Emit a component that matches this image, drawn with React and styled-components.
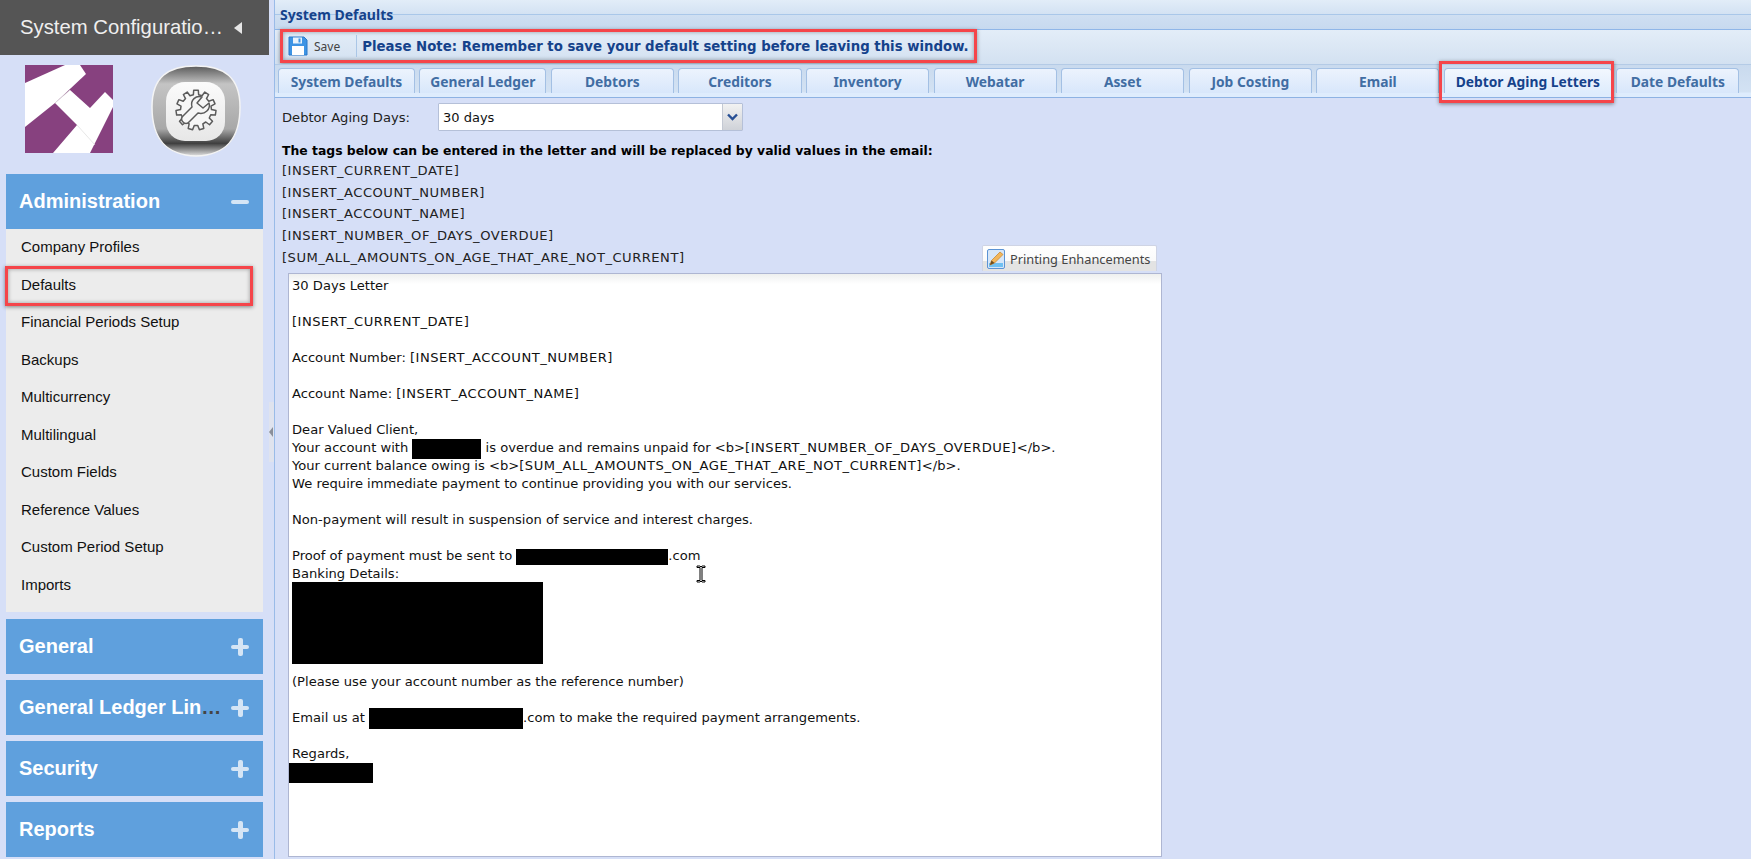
import React from "react";
import styled, { createGlobalStyle } from "styled-components";

const Global = createGlobalStyle`
  html, body { margin: 0; padding: 0; height: 859px; overflow: hidden; background: #d6dff7; }
  #root { height: 859px; }
  * { box-sizing: border-box; }
`;

const Page = styled.div`
  display: flex;
  height: 859px;
  width: 1751px;
  overflow: hidden;
  background: #d6dff7;
`;

const Sidebar = styled.aside`
  width: 269px;
  flex: none;
  display: flex;
  flex-direction: column;
  font-family: "Liberation Sans", Arial, sans-serif;
`;

const AppHeader = styled.header`
  height: 55px;
  background: #555555;
  color: #efefef;
  display: flex;
  align-items: center;
  padding: 0 27px 0 20px;
  justify-content: space-between;
`;

const AppTitle = styled.div`
  width: 204px;
  font-size: 20.3px;
  white-space: nowrap;
  overflow: hidden;
  text-overflow: ellipsis;
`;

const CollapseArrow = styled.span`
  width: 0;
  height: 0;
  border-style: solid;
  border-width: 6.5px 8px 6.5px 0;
  border-color: transparent #e6e6e6 transparent transparent;
`;

const LogoRow = styled.div`
  height: 119px;
  display: flex;
  align-items: flex-start;
  padding: 10px 0 0 25px;
  gap: 37px;
`;

const SectionStack = styled.div`
  display: flex;
  flex-direction: column;
  padding: 0 6px;
  gap: 6px;
`;

const SectionHeader = styled.div`
  height: 55px;
  background: #5fa0dd;
  display: flex;
  align-items: center;
  padding: 0 14px 0 13px;
  justify-content: space-between;
`;

const SectionTitle = styled.div`
  width: 203px;
  color: #444;
  font-size: 20px;
  font-weight: 700;
  white-space: nowrap;
  overflow: hidden;
  text-overflow: ellipsis;
  span { color: #fff; }
`;

const SectionIcon = styled.span`
  position: relative;
  width: 18px;
  height: 18px;
  flex: none;
  &::before {
    content: "";
    position: absolute;
    left: 0;
    right: 0;
    top: 7px;
    height: 4.5px;
    border-radius: 2px;
    background: #d5e5f5;
  }
  &::after {
    content: "";
    display: ${(p) => (p.$open ? "none" : "block")};
    position: absolute;
    top: 0;
    bottom: 0;
    left: 7px;
    width: 4.5px;
    border-radius: 2px;
    background: #d5e5f5;
  }
`;

const MenuBody = styled.div`
  background: #ececec;
  padding-bottom: 8px;
  margin-bottom: 1px;
`;

const MenuItem = styled.div`
  position: relative;
  height: 37.5px;
  padding: 9px 0 0 15px;
  font-size: 15px;
  line-height: 18px;
  color: #111;
  ${(p) =>
    p.$marked &&
    `&::after {
      content: "";
      position: absolute;
      left: -1px;
      right: 10px;
      top: -1px;
      bottom: -2px;
      border: 3px solid #f5454a;
      box-shadow: 0 1px 4px rgba(0,0,0,.45), inset 0 0 4px rgba(0,0,0,.35);
    }`}
`;

const Splitter = styled.div`
  width: 5px;
  flex: none;
  display: flex;
  flex-direction: column;
  padding-top: 402px;
`;

const SplitterGrip = styled.div`
  height: 60px;
  background: #dfe3ee;
  display: flex;
  align-items: center;
  &::before {
    content: "";
    border-style: solid;
    border-width: 5px 4px 5px 0;
    border-color: transparent #8a8f99 transparent transparent;
    margin-left: 0;
  }
`;

const Main = styled.main`
  flex: 1;
  min-width: 0;
  display: flex;
  flex-direction: column;
  border-left: 1px solid #99bbe8;
  font-family: "Noto Sans", Tahoma, sans-serif;
`;

const PanelTitle = styled.div`
  height: 30px;
  padding: 7px 0 0 5px;
  font-size: 14px;
  line-height: 16px;
  font-weight: 700;
  color: #15428b;
  border-bottom: 1px solid #8fb6e8;
  background: linear-gradient(#e2edf8 0, #d3e2f3 14px, #a9c7e9 14px, #a9c7e9 15px, #cfdff2 15px, #c6d9ef 30px);
`;

const Toolbar = styled.div`
  height: 34px;
  padding-left: 5px;
  display: flex;
  align-items: flex-start;
  background: linear-gradient(#e3edf8, #d3e1f1);
`;

const MarkedGroup = styled.div`
  margin-top: -1px;
  height: 34px;
  width: 697px;
  padding-left: 5px;
  display: flex;
  align-items: center;
  border: 3px solid #f5454a;
  box-shadow: 0 1px 4px rgba(0,0,0,.4), inset 0 0 4px rgba(0,0,0,.35);
`;

const SaveButton = styled.div`
  display: flex;
  align-items: center;
  gap: 6px;
  padding-right: 16px;
  font-size: 12px;
  color: #444;
  border-right: 1px solid #aac6e6;
  height: 22px;
`;

const Note = styled.div`
  margin-left: 5px;
  font-family: "DejaVu Sans", Verdana, sans-serif;
  font-size: 13.3px;
  font-weight: 700;
  color: #15428b;
  white-space: nowrap;
`;

const TabStrip = styled.div`
  height: 34px;
  padding: 3px 0 0 3px;
  display: flex;
  gap: 4.4px;
  align-items: flex-start;
  border-top: 1px solid #b4cbe6;
  border-bottom: 1px solid #8db2e3;
  background: linear-gradient(#c9daee 0, #d3e2f3 27px, #deecfd 28px);
`;

const Tab = styled.div`
  position: relative;
  flex: none;
  width: ${(p) => p.$w || 123.2}px;
  height: 25px;
  display: flex;
  align-items: center;
  justify-content: center;
  font-size: 13.8px;
  font-weight: 700;
  white-space: nowrap;
  color: ${(p) => (p.$active ? "#15428b" : "#416da3")};
  border: 1px solid #a3c0e4;
  border-bottom: none;
  border-radius: 4px 4px 0 0;
  background: ${(p) => (p.$active ? "linear-gradient(#f2f7fe, #deecfd)" : "linear-gradient(#ecf3fd, #d8e7fb)")};
  ${(p) =>
    p.$active &&
    `&::after {
      content: "";
      position: absolute;
      left: -6px;
      right: -3px;
      top: -8px;
      bottom: -10px;
      border: 3px solid #f5454a;
      box-shadow: 0 1px 4px rgba(0,0,0,.45);
    }`}
`;

const Content = styled.div`
  flex: 1;
  min-height: 0;
  padding: 5px 0 0 7px;
  display: flex;
  flex-direction: column;
  color: #111;
  font-family: "DejaVu Sans", Verdana, sans-serif;
`;

const FieldRow = styled.div`
  display: flex;
  align-items: center;
  height: 28px;
`;

const FieldLabel = styled.label`
  width: 156px;
  font-size: 13.1px;
  color: #222;
`;

const Select = styled.div`
  width: 305px;
  height: 28px;
  display: flex;
  border: 1px solid #b5c0d8;
  background: #fff;
  border-radius: 1px;
`;

const SelectValue = styled.div`
  flex: 1;
  padding-left: 4px;
  line-height: 27px;
  font-size: 13px;
`;

const SelectArrow = styled.div`
  width: 20px;
  display: flex;
  align-items: center;
  justify-content: center;
  border-left: 1px solid #c4c9d3;
  background: linear-gradient(#f2f2f2, #cfd2d8);
`;

const TagsHeading = styled.div`
  margin-top: 11px;
  font-size: 12.4px;
  font-weight: 700;
  line-height: 18px;
  color: #000;
`;

const TagLine = styled.div`
  height: 21.7px;
  line-height: 21.7px;
  font-size: 13.1px;
  letter-spacing: 0.5px;
  color: #222;
`;

const EditorHead = styled.div`
  position: relative;
  height: 5px;
`;

const PrintButton = styled.div`
  position: absolute;
  left: 700px;
  top: -23px;
  width: 175px;
  height: 26px;
  display: flex;
  align-items: center;
  gap: 5px;
  padding-left: 4px;
  font-family: "Noto Sans", Tahoma, sans-serif;
  font-size: 12.8px;
  color: #444;
  border: 1px solid #cfd4e4;
  border-bottom: none;
  border-radius: 2px 2px 0 0;
  background: linear-gradient(#ffffff 0, #fafafa 60%, #e3e3e3 62%, #e3e3e3);
`;

const Editor = styled.div`
  position: relative;
  margin-left: 6px;
  width: 874px;
  height: 584px;
  padding: 3px 0 0 3px;
  border: 1px solid #aeb6d2;
  background: linear-gradient(#eef0ef 0, #ffffff 10px);
  font-size: 13.1px;
  line-height: 18px;
  color: #111;
  white-space: nowrap;
`;

const Line = styled.div`
  height: 18px;
`;

const Caps = styled.span`
  letter-spacing: 0.5px;
`;

const Redact = styled.span`
  display: inline-block;
  vertical-align: middle;
  background: #000;
  width: ${(p) => p.$w}px;
  height: ${(p) => p.$h}px;
  margin: ${(p) => (18 - p.$h) / 2}px 0;
`;

const RedactBlock = styled.div`
  background: #000;
  width: ${(p) => p.$w}px;
  height: ${(p) => p.$h}px;
  margin-top: ${(p) => p.$mt || 0}px;
  margin-bottom: ${(p) => p.$mb || 0}px;
  margin-left: ${(p) => p.$ml || 0}px;
`;

const TextCursor = styled.svg`
  position: absolute;
  left: 407px;
  top: 291px;
`;

function gearPath(cx, cy, R, r, n) {
  const pts = [];
  const step = (Math.PI * 2) / n;
  for (let i = 0; i < n; i++) {
    const a = i * step - Math.PI / 2;
    const w = step * 0.2;
    const add = (rad, ang) => pts.push(`${(cx + rad * Math.cos(ang)).toFixed(2)} ${(cy + rad * Math.sin(ang)).toFixed(2)}`);
    add(r, a - w * 1.5);
    add(R, a - w);
    add(R, a + w);
    add(r, a + w * 1.5);
  }
  return "M" + pts.join("L") + "Z";
}

const HLogo = () => (
  <svg width="88" height="88" viewBox="0 0 88 88">
    <rect width="88" height="88" fill="#87417f" />
    <path d="M0 18L40 0H55L61 9L30 38L0 62Z" fill="#fff" />
    <path d="M30 38L45 25L65 43L80 27L88 35V42L65 88H28L52 60Z" fill="#fff" />
    <path d="M30 38L45 25M52 60L70 80" stroke="#ddd" strokeWidth="0.7" fill="none" />
  </svg>
);

const GearLogo = () => (
  <svg width="92" height="92" viewBox="0 0 92 92">
    <defs>
      <linearGradient id="bevel" x1="0" y1="0" x2="0" y2="1">
        <stop offset="0" stopColor="#5a5a5a" />
        <stop offset="0.2" stopColor="#c4c4c4" />
        <stop offset="0.7" stopColor="#a8a8a8" />
        <stop offset="0.86" stopColor="#3f3f3f" />
        <stop offset="1" stopColor="#e2e2e2" />
      </linearGradient>
      <linearGradient id="face" x1="0" y1="0" x2="0" y2="1">
        <stop offset="0" stopColor="#fbfbfb" />
        <stop offset="1" stopColor="#e7e7e7" />
      </linearGradient>
    </defs>
    <path d="M46 1C74 1 90 12 90 42C90 74 76 90 46 91C16 90 2 74 2 42C2 12 18 1 46 1Z" fill="url(#bevel)" stroke="#f4f4f4" strokeWidth="1.5" />
    <rect x="16" y="17" width="59" height="59" rx="19" fill="url(#face)" />
    <path d={gearPath(46, 45, 20, 15.5, 11)} fill="#f6f6f6" stroke="#5b5b5b" strokeWidth="1.5" strokeLinejoin="round" />
    <circle cx="46" cy="45" r="11" fill="#f6f6f6" stroke="none" />
    <path d="M52 32C46 30 40 35 42 42L33 51C29 55 35 61 39 57L48 48C55 50 61 44 59 38L53 43L47 38Z" fill="#f6f6f6" stroke="#5b5b5b" strokeWidth="1.5" strokeLinejoin="round" />
  </svg>
);

const FloppyIcon = () => (
  <svg width="20" height="20" viewBox="0 0 20 20">
    <path d="M1 1H16L19 4V19H1Z" fill="#3d94e4" stroke="#2b79c8" strokeWidth="1" />
    <rect x="5" y="1.5" width="9" height="6" fill="#e8f2fb" />
    <rect x="10.5" y="2.5" width="2" height="4" fill="#3d94e4" />
    <rect x="4" y="10" width="12" height="9" fill="#ffffff" />
  </svg>
);

const PencilIcon = () => (
  <svg width="18" height="20" viewBox="0 0 18 20">
    <rect x="0.5" y="0.5" width="17" height="19" rx="1.5" fill="#d6e6f8" stroke="#5b93d4" />
    <rect x="2" y="14" width="14" height="4" fill="#6fc0f2" />
    <path d="M3 16L4.5 11.5L13 3L16 5.5L7.5 14Z" fill="#f2b65a" stroke="#c98a32" strokeWidth="0.8" />
    <path d="M3 16L4.5 11.5L7.5 14Z" fill="#6b4b20" />
  </svg>
);

const ChevronIcon = () => (
  <svg width="11" height="8" viewBox="0 0 11 8">
    <path d="M1 1.5L5.5 6L10 1.5" fill="none" stroke="#274f94" strokeWidth="2.4" />
  </svg>
);

const menuItems = ["Company Profiles", "Defaults", "Financial Periods Setup", "Backups", "Multicurrency", "Multilingual", "Custom Fields", "Reference Values", "Custom Period Setup", "Imports"];
const closedSections = ["General", "General Ledger Linking", "Security", "Reports"];
const tabs = [
  { label: "System Defaults", width: 137 },
  { label: "General Ledger", width: 127 },
  { label: "Debtors" },
  { label: "Creditors" },
  { label: "Inventory" },
  { label: "Webatar" },
  { label: "Asset" },
  { label: "Job Costing" },
  { label: "Email" },
  { label: "Debtor Aging Letters", width: 168, active: true },
  { label: "Date Defaults" },
];
const tags = ["[INSERT_CURRENT_DATE]", "[INSERT_ACCOUNT_NUMBER]", "[INSERT_ACCOUNT_NAME]", "[INSERT_NUMBER_OF_DAYS_OVERDUE]", "[SUM_ALL_AMOUNTS_ON_AGE_THAT_ARE_NOT_CURRENT]"];

export default function App() {
  return (
    <Page>
      <Global />
      <Sidebar>
        <AppHeader>
          <AppTitle>System Configuration Manager</AppTitle>
          <CollapseArrow />
        </AppHeader>
        <LogoRow>
          <HLogo />
          <GearLogo />
        </LogoRow>
        <SectionStack>
          <div>
            <SectionHeader>
              <SectionTitle><span>Administration</span></SectionTitle>
              <SectionIcon $open />
            </SectionHeader>
            <MenuBody>
              {menuItems.map((m) => (
                <MenuItem key={m} $marked={m === "Defaults"}>{m}</MenuItem>
              ))}
            </MenuBody>
          </div>
          {closedSections.map((s) => (
            <SectionHeader key={s}>
              <SectionTitle><span>{s}</span></SectionTitle>
              <SectionIcon />
            </SectionHeader>
          ))}
        </SectionStack>
      </Sidebar>
      <Splitter><SplitterGrip /></Splitter>
      <Main>
        <PanelTitle>System Defaults</PanelTitle>
        <Toolbar>
          <MarkedGroup>
            <SaveButton><FloppyIcon />Save</SaveButton>
            <Note>Please Note: Remember to save your default setting before leaving this window.</Note>
          </MarkedGroup>
        </Toolbar>
        <TabStrip>
          {tabs.map((t) => (
            <Tab key={t.label} $w={t.width} $active={t.active}>{t.label}</Tab>
          ))}
        </TabStrip>
        <Content>
          <FieldRow>
            <FieldLabel>Debtor Aging Days:</FieldLabel>
            <Select>
              <SelectValue>30 days</SelectValue>
              <SelectArrow><ChevronIcon /></SelectArrow>
            </Select>
          </FieldRow>
          <TagsHeading>The tags below can be entered in the letter and will be replaced by valid values in the email:</TagsHeading>
          {tags.map((t) => <TagLine key={t}>{t}</TagLine>)}
          <EditorHead>
            <PrintButton><PencilIcon />Printing Enhancements</PrintButton>
          </EditorHead>
          <Editor>
            <TextCursor width="10" height="18" viewBox="0 0 10 18">
              <path d="M1 1H4L5 2L6 1H9V2.5H6V15.5H9V17H6L5 16L4 17H1V15.5H4V2.5H1Z" fill="#fff" stroke="#000" strokeWidth="1" />
            </TextCursor>
            <Line>30 Days Letter</Line>
            <Line />
            <Line><Caps>[INSERT_CURRENT_DATE]</Caps></Line>
            <Line />
            <Line>Account Number: <Caps>[INSERT_ACCOUNT_NUMBER]</Caps></Line>
            <Line />
            <Line>Account Name: <Caps>[INSERT_ACCOUNT_NAME]</Caps></Line>
            <Line />
            <Line>Dear Valued Client,</Line>
            <Line>Your account with <Redact $w={69} $h={20} /> is overdue and remains unpaid for &lt;b&gt;<Caps>[INSERT_NUMBER_OF_DAYS_OVERDUE]</Caps>&lt;/b&gt;.</Line>
            <Line>Your current balance owing is &lt;b&gt;<Caps>[SUM_ALL_AMOUNTS_ON_AGE_THAT_ARE_NOT_CURRENT]</Caps>&lt;/b&gt;.</Line>
            <Line>We require immediate payment to continue providing you with our services.</Line>
            <Line />
            <Line>Non-payment will result in suspension of service and interest charges.</Line>
            <Line />
            <Line>Proof of payment must be sent to <Redact $w={152} $h={16} />.com</Line>
            <Line>Banking Details:</Line>
            <RedactBlock $w={251} $h={82} $mt={-1} $mb={9} />
            <Line>(Please use your account number as the reference number)</Line>
            <Line />
            <Line>Email us at <Redact $w={154} $h={21} />.com to make the required payment arrangements.</Line>
            <Line />
            <Line>Regards,</Line>
            <RedactBlock $w={84} $h={20} $ml={-3} />
          </Editor>
        </Content>
      </Main>
    </Page>
  );
}
